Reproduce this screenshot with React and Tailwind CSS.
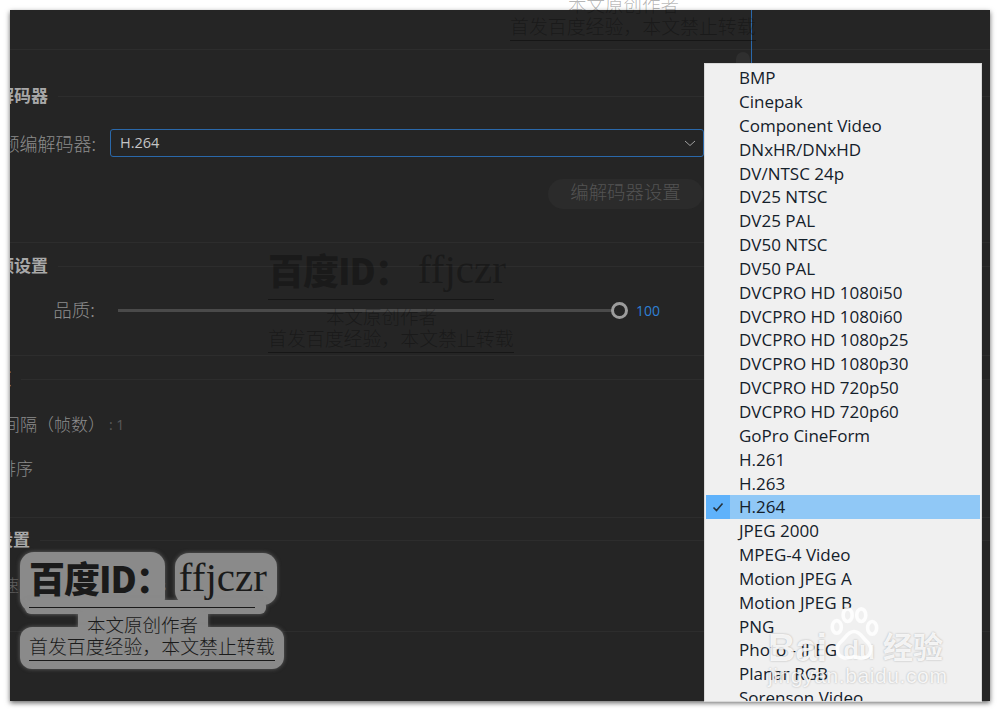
const codecs = [
  "BMP",
  "Cinepak",
  "Component Video",
  "DNxHR/DNxHD",
  "DV/NTSC 24p",
  "DV25 NTSC",
  "DV25 PAL",
  "DV50 NTSC",
  "DV50 PAL",
  "DVCPRO HD 1080i50",
  "DVCPRO HD 1080i60",
  "DVCPRO HD 1080p25",
  "DVCPRO HD 1080p30",
  "DVCPRO HD 720p50",
  "DVCPRO HD 720p60",
  "GoPro CineForm",
  "H.261",
  "H.263",
  "H.264",
  "JPEG 2000",
  "MPEG-4 Video",
  "Motion JPEG A",
  "Motion JPEG B",
  "PNG",
  "Photo - JPEG",
  "Planar RGB",
  "Sorenson Video",
];

const cjk = "font-['Noto_Sans_CJK_SC','Noto_Sans',sans-serif]";
const halo = "absolute bg-[#8a8a8a] shadow-[0_0_4px_rgba(138,138,138,0.6)]";

const Heading = ({ label, width }) => (
  <div className="flex items-center h-6 gap-2.5">
    <div className={`${width} flex justify-end shrink-0 whitespace-nowrap text-[17px] font-bold text-[#a8a8a8] -mt-0.5`}>
      {label}
    </div>
    <div className="flex-1 h-px bg-[#2d2d2d]" />
  </div>
);

const Row = ({ label, width, children }) => (
  <div className="flex items-center h-6 whitespace-nowrap text-[17px] text-[#8c8c8c]">
    <div className={`${width} flex justify-end shrink-0 font-light`}>{label}</div>
    {children}
  </div>
);

const Watermark = ({ className, textClass, lineClass }) => (
  <div className={`absolute w-[250px] ${textClass} ${className}`}>
    <div className="flex items-center h-[46px] whitespace-nowrap">
      <span className={`${cjk} font-black text-[36px] leading-none tracking-[-1px]`}>百度ID：</span>
      <span className="font-['Liberation_Serif',serif] text-[41px] leading-none ml-[8px]">ffjczr</span>
    </div>
    <div className={`h-px w-[226px] mt-[7px] ${lineClass}`} />
    <div className={`${cjk} font-light text-[18.5px] leading-6 mt-1 ml-[58px] whitespace-nowrap`}>本文原创作者</div>
    <div className={`${cjk} font-light text-[18.9px] leading-6 -mt-0.5 whitespace-nowrap`}>首发百度经验，本文禁止转载</div>
    <div className={`h-px w-[246px] mt-0.5 ${lineClass}`} />
  </div>
);

const BaiduMark = () => (
  <div className="absolute left-[768px] top-[604px] w-[190px] text-white/85 [text-shadow:0_0_2px_rgba(0,0,0,0.3)] font-['Liberation_Sans',sans-serif]">
    <div className="relative flex items-end h-[66px]">
      <span className="text-[38px] leading-[44px] font-bold">Bai</span>
      <span className="text-[26px] leading-[40px] font-bold ml-[16px]">du</span>
      <span className={`${cjk} text-[30px] leading-[50px] font-bold ml-[8px]`}>经验</span>
      <svg className="absolute left-[60px] top-[3px] w-[52px] h-[58px]" viewBox="0 0 56 64" fill="none" stroke="currentColor" strokeWidth="4">
        <ellipse cx="9" cy="22" rx="5" ry="7" />
        <ellipse cx="21" cy="9" rx="5" ry="7" />
        <ellipse cx="36" cy="9" rx="5" ry="7" />
        <ellipse cx="48" cy="23" rx="5" ry="7" />
        <path d="M28 27c-7 0-9 7-14 11-6 5-6 16 3 18 5 1 8-1 11-1s6 2 11 1c9-2 9-13 3-18-5-4-7-11-14-11z" />
      </svg>
    </div>
    <div className="text-[21px] leading-6 tracking-[0.6px] whitespace-nowrap -mt-[6px]">jingyan.baidu.com</div>
  </div>
);

const CodecMenu = () => (
  <div className="absolute left-[704px] top-[63px] w-[278px] h-[639px] overflow-hidden bg-[#f0f0f0] border border-[#d8d8d8] pt-0.5 px-px font-['Open_Sans',sans-serif] text-[17px] text-[#14202a]">
    {codecs.map((name) => {
      const selected = name === "H.264";
      return (
        <div key={name} className={`flex items-center h-[23.85px] ${selected ? "bg-[#90c8f6]" : ""}`}>
          <div className={`w-[24px] h-full flex items-center justify-center shrink-0 ${selected ? "bg-[#5fb2fb]" : ""}`}>
            {selected && (
              <svg className="w-3 h-3" viewBox="0 0 12 12" fill="none" stroke="#26323c" strokeWidth="1.6">
                <path d="M1.5 6.5 4.5 9.5 10.5 2.5" />
              </svg>
            )}
          </div>
          <span className="ml-[9px] whitespace-nowrap">{name}</span>
        </div>
      );
    })}
  </div>
);

export default function App() {
  return (
    <div className={`relative w-[1000px] h-[712px] overflow-hidden bg-white pt-2.5 pl-2.5 ${cjk}`}>
      <div className="relative w-[980px] h-[691px] overflow-hidden bg-[#252525] shadow-[0_2px_5px_rgba(0,0,0,0.6)] flex flex-col">
        {/* top strip, the blue edge is the right side of the form column */}
        <div className="h-10 shrink-0 border-b border-[#2d2d2d]" />

        <div className="h-[193px] shrink-0 border-b border-[#2d2d2d] pt-[34px]">
          <Heading label="视频编解码器" width="w-[38px]" />
          <div className="flex items-center mt-[21px] h-[28px]">
            <div className="w-[86px] shrink-0 flex justify-end whitespace-nowrap text-[18px] font-light text-[#8c8c8c]">
              视频编解码器:
            </div>
            <div className="ml-[14px] w-[594px] h-[28px] flex items-center justify-between pl-[9px] pr-2.5 rounded-[3px] border border-[#2a68aa] font-['Open_Sans',sans-serif] text-[14.5px] text-[#c4c4c4]">
              H.264
              <svg className="w-3 h-3 -mr-[3px]" viewBox="0 0 12 12" fill="none" stroke="#a0a0a0" strokeWidth="1">
                <path d="M1 4l5 4.5L11 4" />
              </svg>
            </div>
          </div>
          <div className="flex mt-[22px] pl-[538px]">
            <div className="w-[155px] h-[30px] rounded-full bg-[#2b2b2b] flex items-center justify-center pb-1 text-[18.4px] font-light text-[#535353]">
              编解码器设置
            </div>
          </div>
        </div>

        <div className="h-[113px] shrink-0 border-b border-[#2d2d2d] pt-[11px]">
          <Heading label="视频设置" width="w-[38px]" />
          <div className="mt-5">
            <Row label="品质:" width="w-[85px] text-[18.5px]">
              <div className="ml-[23px] w-[494px] h-[3px] bg-[#4a4a4a]" />
              <div className="ml-[-1px] w-[17px] h-[17px] rounded-full border-[3px] border-[#9c9c9c] shrink-0" />
              <span className="ml-[8px] font-['Open_Sans',sans-serif] text-[14px] text-[#2f80d4]">100</span>
            </Row>
          </div>
        </div>

        <div className="h-[162px] shrink-0 border-b border-[#2d2d2d] pt-[11px]">
          <Heading label="关键帧" width="w-px" />
          <div className="mt-[21px]">
            <Row label="关键帧间隔（帧数）" width="w-[95px]">
              <span className="ml-1 font-['Open_Sans',sans-serif] text-[14px] text-[#5a5a5a]">: 1</span>
            </Row>
          </div>
          <div className="mt-5">
            <Row label="帧排序" width="w-[23px]" />
          </div>
        </div>

        <div className="h-[114px] shrink-0 border-b border-[#2d2d2d] pt-2.5">
          <Heading label="比特率设置" width="w-[20px]" />
          <div className="mt-[21px] text-[#5f5f5f]">
            <div className="flex items-center h-6 whitespace-nowrap text-[17px]">
              <span className="-ml-2 font-light">速率限制为:</span>
              <span className="ml-2 font-['Open_Sans',sans-serif] text-[14px]">1000 kbps</span>
            </div>
          </div>
        </div>

        {/* right column edge and scrollbar thumb */}
        <div className="absolute left-[741px] top-0 w-px h-[53px] bg-[#2a68aa]" />
        <div className="absolute left-[726px] top-[42px] w-[14px] h-[20px] rounded-full bg-[#2f2f2f]" />
      </div>

      <Watermark className="left-[510px] top-[-66px]" textClass="text-black/30" lineClass="bg-black/40" />
      <Watermark className="left-[268px] top-[246px]" textClass="text-black/30" lineClass="bg-black/40" />

      {/* light halo behind the lower watermark */}
      <div className={`${halo} left-[20px] top-[552px] w-[145px] h-[60px] rounded-[14px]`} />
      <div className={`${halo} left-[175px] top-[553px] w-[102px] h-[52px] rounded-[14px]`} />
      <div className={`${halo} left-[25px] top-[600px] w-[241px] h-[14px] rounded-[6px]`} />
      <div className={`${halo} left-[78px] top-[612px] w-[130px] h-[24px]`} />
      <div className={`${halo} left-[20px] top-[627px] w-[264px] h-[42px] rounded-[12px]`} />
      <Watermark className="left-[29px] top-[554px]" textClass="text-[#1a1a1a]" lineClass="bg-[#1a1a1a]" />

      <CodecMenu />
      <BaiduMark />
    </div>
  );
}
